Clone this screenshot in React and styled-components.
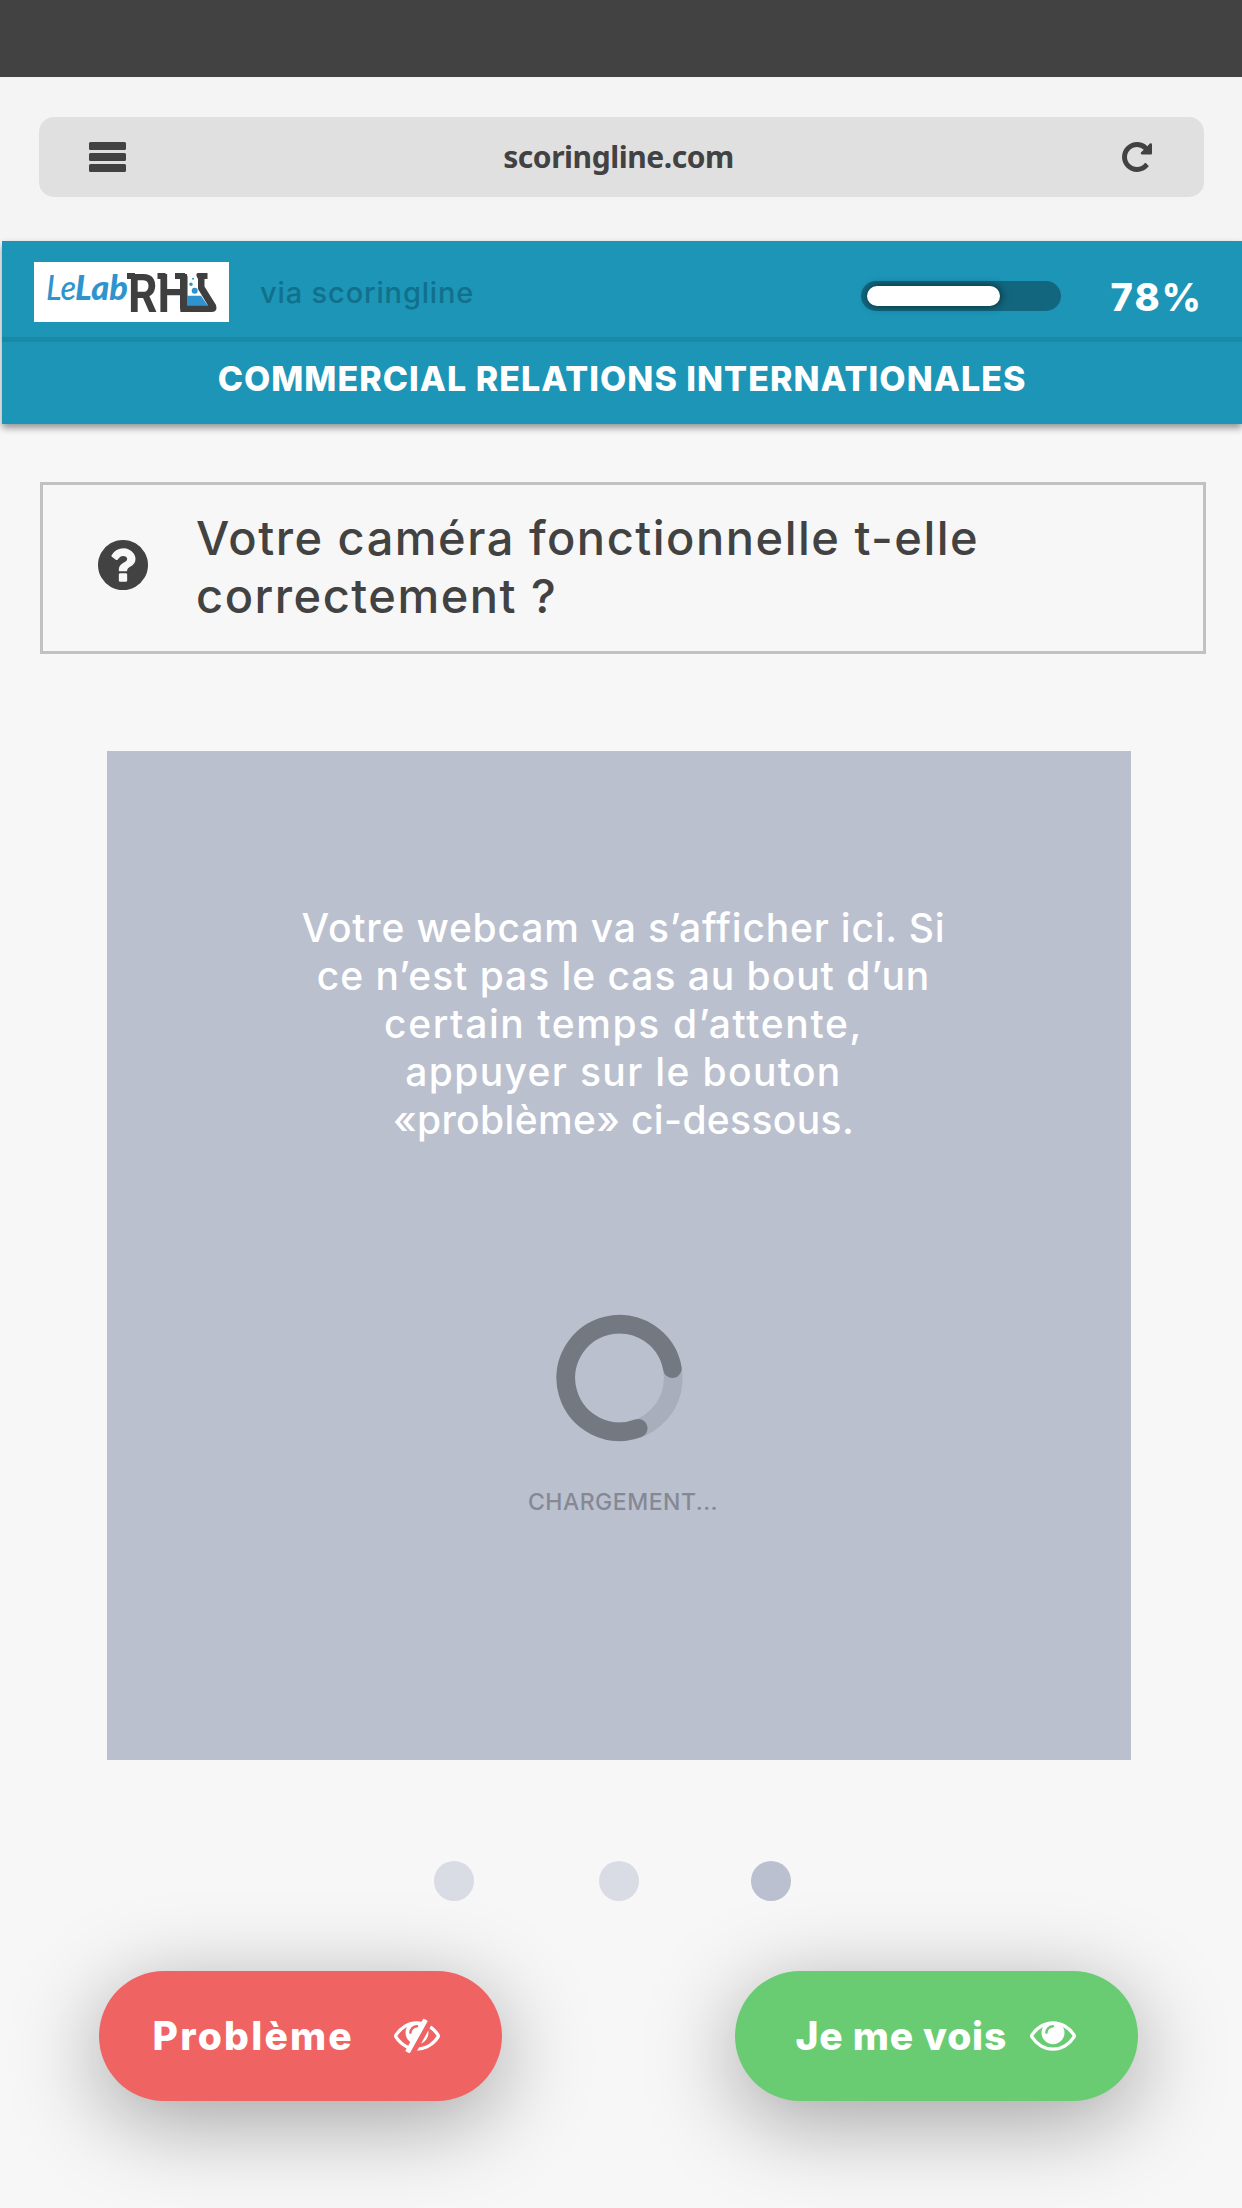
import styled, { createGlobalStyle } from "styled-components"

const webcamLines = [
    { text: "Votre webcam va s’afficher ici. Si", spacing: 0.8 },
    { text: "ce n’est pas le cas au bout d’un", spacing: 0.95 },
    { text: "certain temps d’attente,", spacing: 1.6 },
    { text: "appuyer sur le bouton", spacing: 1.35 },
    { text: "«problème» ci-dessous.", spacing: 0.35 },
]

const progress = 78

function ReloadIcon() {
    return (
        <svg width="30" height="30" viewBox="128 128 1536 1536" fill="currentColor">
            <path d="M1664 256v448q0 26-19 45t-45 19h-448q-42 0-59-40-17-39 14-69l138-138q-148-137-349-137-104 0-198.5 40.5t-163.5 109.5-109.5 163.5-40.5 198.5 40.5 198.5 109.5 163.5 163.5 109.5 198.5 40.5q119 0 225-52t179-147q7-10 23-12 15 0 25 9l137 138q9 8 9.5 20.5t-7.5 22.5q-109 132-264 204.5t-327 72.5q-156 0-298-61t-245-164-164-245-61-298 61-298 164-245 245-164 298-61q147 0 284.5 55.5t244.5 156.5l130-129q29-31 70-14 39 17 39 59z" />
        </svg>
    )
}

function QuestionIcon() {
    return (
        <svg width="50" height="50" viewBox="128 128 1536 1536" fill="currentColor">
            <path d="M1024 1376v-192q0-14-9-23t-23-9h-192q-14 0-23 9t-9 23v192q0 14 9 23t23 9h192q14 0 23-9t9-23zm256-672q0-88-55.5-163t-138.5-116-170-41q-243 0-371 213-15 24 8 42l132 100q7 6 19 6 16 0 25-12 53-68 86-92 34-24 86-24 48 0 85.5 26t37.5 59q0 38-20 61t-68 45q-63 28-115.5 86.5t-52.5 125.5v36q0 14 9 23t23 9h192q14 0 23-9t9-23q0-19 21.5-49.5t54.5-49.5q32-18 49-28.5t46-35 44.5-48 28-60.5 12.5-81zm384 192q0 209-103 385.5t-279.5 279.5-385.5 103-385.5-103-279.5-279.5-103-385.5 103-385.5 279.5-279.5 385.5-103 385.5 103 279.5 279.5 103 385.5z" />
        </svg>
    )
}

function EyeIcon() {
    return (
        <svg width="46" height="46" viewBox="0 64 1792 1792" fill="currentColor">
            <path d="M1664 960q-152-236-381-353 61 104 61 225 0 185-131.5 316.5t-316.5 131.5-316.5-131.5-131.5-316.5q0-121 61-225-229 117-381 353 133 205 333.5 326.5t434.5 121.5 434.5-121.5 333.5-326.5zm-720-384q0-20-14-34t-34-14q-125 0-214.5 89.5t-89.5 214.5q0 20 14 34t34 14 34-14 14-34q0-86 61-147t147-61q20 0 34-14t14-34zm848 384q0 34-20 69-140 230-376.5 368.5t-499.5 138.5-499.5-139-376.5-368q-20-35-20-69t20-69q140-229 376.5-368t499.5-139 499.5 139 376.5 368q20 35 20 69z" />
        </svg>
    )
}

function EyeSlashIcon() {
    return (
        <svg width="46" height="46" viewBox="0 64 1792 1792" fill="currentColor">
            <path d="M555 1335l78-141q-87-63-136-159t-49-203q0-121 61-225-229 117-381 353 167 258 427 375zm389-759q0-20-14-34t-34-14q-125 0-214.5 89.5t-89.5 214.5q0 20 14 34t34 14 34-14 14-34q0-86 61-147t147-61q20 0 34-14t14-34zm363-191q0 7-1 9-106 189-316 567t-315 566l-49 89q-10 16-28 16-12 0-134-70-16-10-16-28 0-12 44-87-143-65-263.5-173t-208.5-245q-20-31-20-69t20-69q153-235 380-371t496-136q89 0 180 17l54-97q10-16 28-16 5 0 18 6t31 15.5 33 18.5 31.5 18.5 19.5 11.5q16 10 16 27zm37 447q0 139-79 253.5t-209 164.5l280-502q8 45 8 84zm448 128q0 35-20 69-39 64-109 145-150 172-347.5 267t-419.5 95l74-132q212-18 392.5-137t301.5-307q-115-179-282-294l63-112q95 64 182.5 153t144.5 184q20 34 20 69z" />
        </svg>
    )
}

function Logo() {
    return (
        <svg width="195" height="60" viewBox="0 0 195 60" overflow="visible">
            <g fontFamily="Lato, sans-serif" fontStyle="italic" fill="#2f94cd">
                <text x="12" y="38" fontSize="35" fontWeight="500" textLength="30" lengthAdjust="spacingAndGlyphs">
                    Le
                </text>
                <text x="41" y="38" fontSize="35" fontWeight="900" textLength="53" lengthAdjust="spacingAndGlyphs">
                    Lab
                </text>
            </g>
            <text x="94" y="50" fontFamily="Roboto, sans-serif" fontSize="54.5" fontWeight="700" fill="#3f3f3f" textLength="62" lengthAdjust="spacingAndGlyphs">
                RH
            </text>
            <path d="M93 11h8v6h-8zM123.5 11h8v6h-8zM141 11h10v6h-10z" fill="#3f3f3f" />
            <path d="M153.5 33.7h13.5l7 10h-20.5z" fill="#2f94cd" />
            <path d="M146 14V45q0 5 5 5H178q6 0 4-7L170.5 24.5V17H173.5V11H164q-2 0-1.5 3l1.5 3V27L174 43.5H153.5V14z" fill="#3f3f3f" />
            <circle cx="160.7" cy="28.7" r="3" fill="#2f94cd" />
            <circle cx="157" cy="22.3" r="1.7" fill="#2f94cd" />
            <circle cx="159" cy="16.7" r="1" fill="#2f94cd" />
        </svg>
    )
}

export default function App() {
    return (
        <StyledPage>
            <GlobalStyle />
            <StatusBar />
            <BrowserBar>
                <AddressBar>
                    <MenuIcon>
                        <span />
                        <span />
                        <span />
                    </MenuIcon>
                    <Address>scoringline.com</Address>
                    <ReloadIcon />
                </AddressBar>
            </BrowserBar>
            <Header>
                <HeaderTop>
                    <LogoBox>
                        <Logo />
                    </LogoBox>
                    <Via>via scoringline</Via>
                    <ProgressTrack>
                        <ProgressFill />
                    </ProgressTrack>
                    <Percent>{progress}%</Percent>
                </HeaderTop>
                <JobTitle>COMMERCIAL RELATIONS INTERNATIONALES</JobTitle>
            </Header>
            <Question>
                <QuestionIcon />
                <h1>
                    Votre caméra fonctionnelle t-elle
                    <br />
                    correctement ?
                </h1>
            </Question>
            <Webcam>
                <WebcamText>
                    {webcamLines.map((line) => (
                        <WebcamLine key={line.text} $spacing={line.spacing}>
                            {line.text}
                        </WebcamLine>
                    ))}
                </WebcamText>
                <svg width="128" height="128" viewBox="-64.5 -64 128 128" fill="none" strokeWidth="18.6">
                    <circle r="53.7" stroke="#a8aebb" />
                    <path d="M52.9 -9.3A53.7 53.7 0 1 0 18.7 50.3" stroke="#747881" strokeLinecap="round" />
                </svg>
                <Loading>CHARGEMENT...</Loading>
            </Webcam>
            <Steps>
                <Step />
                <Step />
                <Step $active />
            </Steps>
            <Actions>
                <ActionButton $color="#f06363" $gap="40px" $spacing="2.2px">
                    <span>Problème</span>
                    <EyeSlashIcon />
                </ActionButton>
                <ActionButton $color="#69cc72" $gap="23px" $spacing="0.75px">
                    <span>Je me vois</span>
                    <EyeIcon />
                </ActionButton>
            </Actions>
        </StyledPage>
    )
}

const GlobalStyle = createGlobalStyle`
    * {
        box-sizing: border-box;
    }
    body {
        margin: 0;
        background-color: #f7f7f7;
    }
`

const StyledPage = styled.main`
    width: 1242px;
    height: 2208px;
    overflow: hidden;
    background-color: #f7f7f7;
    color: #424242;
    font-family: Inter, sans-serif;
    svg {
        display: block;
        flex-shrink: 0;
    }
`

const StatusBar = styled.div`
    height: 77px;
    background-color: #424242;
`

const BrowserBar = styled.div`
    height: 164px;
    padding: 40px 38px 0 39px;
    background-color: #f4f4f4;
`

const AddressBar = styled.div`
    height: 80px;
    display: flex;
    align-items: center;
    justify-content: space-between;
    padding: 0 52px 0 50px;
    border-radius: 15px;
    background-color: #e0e0e0;
`

const MenuIcon = styled.div`
    display: flex;
    flex-direction: column;
    gap: 3.5px;
    span {
        width: 37px;
        height: 7.7px;
        border-radius: 1.5px;
        background-color: #424242;
    }
`

const Address = styled.span`
    margin-right: 11px;
    font-family: "Noto Sans", sans-serif;
    font-size: 30px;
    font-weight: 700;
    line-height: 40px;
    letter-spacing: -0.45px;
`

const Header = styled.header`
    height: 183px;
    margin-left: 2px;
    background-color: #1c95b7;
    box-shadow: 0 4px 7px rgba(0, 0, 0, 0.4);
`

const HeaderTop = styled.div`
    height: 101px;
    display: flex;
    align-items: center;
    padding: 0 39px 0 32px;
    border-bottom: 5px solid #1a88a7;
`

const LogoBox = styled.div`
    width: 195px;
    height: 60px;
    margin-top: 5px;
    background-color: #ffffff;
`

const Via = styled.span`
    margin: 8px auto 0 31px;
    font-size: 29px;
    font-weight: 500;
    line-height: 36px;
    letter-spacing: 0.85px;
    color: #11708c;
`

const ProgressTrack = styled.div`
    width: 200px;
    height: 30px;
    margin: 14px 50px 0 0;
    padding: 5px 6px;
    border-radius: 15px;
    background-color: #12677f;
`

const ProgressFill = styled.div`
    width: 133px;
    height: 20px;
    border-radius: 10px;
    background-color: #ffffff;
    box-shadow: 1px 0 10px rgba(0, 0, 0, 0.6);
`

const Percent = styled.span`
    margin-top: 16px;
    font-size: 38px;
    font-weight: 800;
    line-height: 44px;
    letter-spacing: 2.1px;
    color: #ffffff;
`

const JobTitle = styled.h2`
    margin: 0;
    padding-top: 15px;
    font-size: 34px;
    font-weight: 800;
    line-height: 44px;
    letter-spacing: 1.02px;
    text-align: center;
    white-space: nowrap;
    color: #ffffff;
`

const Question = styled.section`
    width: 1166px;
    height: 172px;
    display: flex;
    align-items: center;
    gap: 48px;
    margin: 58px 0 0 40px;
    padding: 0 0 6px 55px;
    border: 3px solid #c1c1c1;
    h1 {
        margin: 0;
        padding-top: 3px;
        font-size: 47px;
        font-weight: 500;
        line-height: 58px;
        letter-spacing: 1.5px;
        white-space: nowrap;
    }
`

const Webcam = styled.section`
    width: 1024px;
    height: 1009px;
    display: flex;
    flex-direction: column;
    align-items: center;
    margin: 97px 0 0 107px;
    padding-top: 153px;
    background-color: #bbc0cf;
`

const WebcamText = styled.p`
    height: 410px;
    margin: 0;
    padding-left: 9px;
    font-size: 39px;
    font-weight: 500;
    line-height: 48px;
    text-align: center;
    white-space: nowrap;
    color: #ffffff;
`

const WebcamLine = styled.span`
    display: block;
    letter-spacing: ${(props) => props.$spacing}px;
`

const Loading = styled.span`
    margin: 45px 0 0 8px;
    font-size: 23px;
    font-weight: 500;
    line-height: 30px;
    letter-spacing: 0.5px;
    color: #858994;
`

const Steps = styled.div`
    display: flex;
    margin: 101px 0 0 434px;
    div:nth-child(2) {
        margin: 0 112px 0 125px;
    }
`

const Step = styled.div`
    width: 40px;
    height: 40px;
    border-radius: 50%;
    background-color: ${(props) => (props.$active ? "#bac0cf" : "#d9dce4")};
`

const Actions = styled.div`
    display: flex;
    justify-content: space-between;
    padding: 70px 104px 0 99px;
`

const ActionButton = styled.button`
    width: 403px;
    height: 130px;
    display: flex;
    align-items: center;
    justify-content: flex-end;
    gap: ${(props) => props.$gap};
    padding: 0 62px 0 0;
    border: none;
    border-radius: 65px;
    background-color: ${(props) => props.$color};
    box-shadow: 0 20px 90px rgba(0, 0, 0, 0.35);
    font-family: inherit;
    font-size: 39px;
    font-weight: 800;
    letter-spacing: ${(props) => props.$spacing};
    color: #ffffff;
    span {
        padding-bottom: 2px;
    }
`
